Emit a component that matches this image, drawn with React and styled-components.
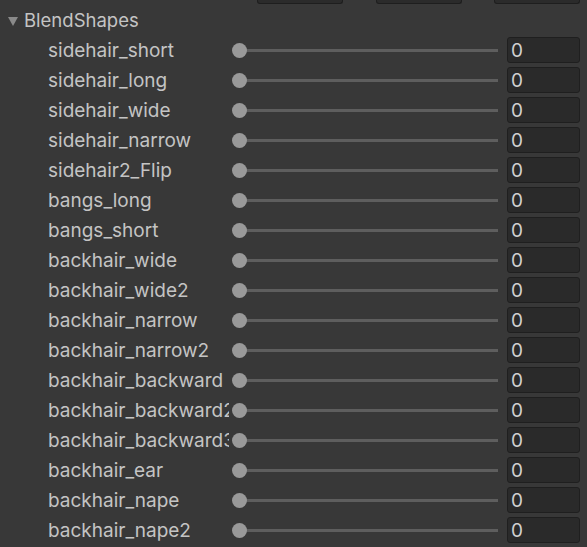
import React from "react";
import styled, { createGlobalStyle } from "styled-components";

const GlobalStyle = createGlobalStyle`
    body {
        margin: 0;
        background: #383838;
        font-family: Inter, "Noto Sans", sans-serif;
    }
`;

const Panel = styled.div`
    width: 587px;
    height: 547px;
    overflow: hidden;
    background: #383838;
    color: #c4c4c4;
`;

const Toolbar = styled.div`
    height: 5px;
    display: flex;
    align-items: flex-start;
    padding-left: 257px;
    gap: 33px;
`;

const ToolButton = styled.div`
    width: 86px;
    height: 4px;
    box-sizing: border-box;
    background: #2b2b2b;
    border: 1px solid #1e1e1e;
    border-top: none;
    border-radius: 0 0 3px 3px;
    margin-left: ${(p) => p.$shift || 0}px;
`;

const Header = styled.div`
    height: 30px;
    display: flex;
    align-items: center;
    padding-left: 8px;
    gap: 6px;
    font-size: 18.5px;
`;

const Arrow = styled.span`
    width: 0;
    height: 0;
    border-left: 5px solid transparent;
    border-right: 5px solid transparent;
    border-top: 9px solid #8a8a8a;
    margin-top: 2px;
`;

const Row = styled.div`
    height: 30px;
    display: flex;
    align-items: center;
    padding-left: 48px;
`;

const Label = styled.div`
    width: 181px;
    flex: none;
    overflow: hidden;
    white-space: nowrap;
    font-size: 19px;
`;

const Slider = styled.div`
    width: 266px;
    margin-left: 3px;
    height: 15px;
    position: relative;
    display: flex;
    align-items: center;
    padding-left: 7px;
    box-sizing: border-box;
`;

const Track = styled.div`
    flex: 1;
    height: 3px;
    background: #5e5e5e;
`;

const Knob = styled.div`
    position: absolute;
    left: 0;
    top: 0;
    width: 15px;
    height: 15px;
    border-radius: 50%;
    background: #999999;
`;

const Field = styled.div`
    margin-left: 9px;
    width: 73px;
    height: 26px;
    box-sizing: border-box;
    background: #2a2a2a;
    border: 1px solid #1f1f1f;
    border-radius: 3px;
    padding-left: 3px;
    display: flex;
    align-items: center;
    font-size: 19px;
    color: #d0d0d0;
`;

const shapes = [
    "sidehair_short",
    "sidehair_long",
    "sidehair_wide",
    "sidehair_narrow",
    "sidehair2_Flip",
    "bangs_long",
    "bangs_short",
    "backhair_wide",
    "backhair_wide2",
    "backhair_narrow",
    "backhair_narrow2",
    "backhair_backward",
    "backhair_backward2",
    "backhair_backward3",
    "backhair_ear",
    "backhair_nape",
    "backhair_nape2",
];

export default function App() {
    return (
        <Panel>
            <GlobalStyle />
            <Toolbar>
                <ToolButton />
                <ToolButton />
                <ToolButton $shift={-1} />
            </Toolbar>
            <Header>
                <Arrow />
                BlendShapes
            </Header>
            {shapes.map((name) => (
                <Row key={name}>
                    <Label>{name}</Label>
                    <Slider>
                        <Track />
                        <Knob />
                    </Slider>
                    <Field>0</Field>
                </Row>
            ))}
        </Panel>
    );
}
